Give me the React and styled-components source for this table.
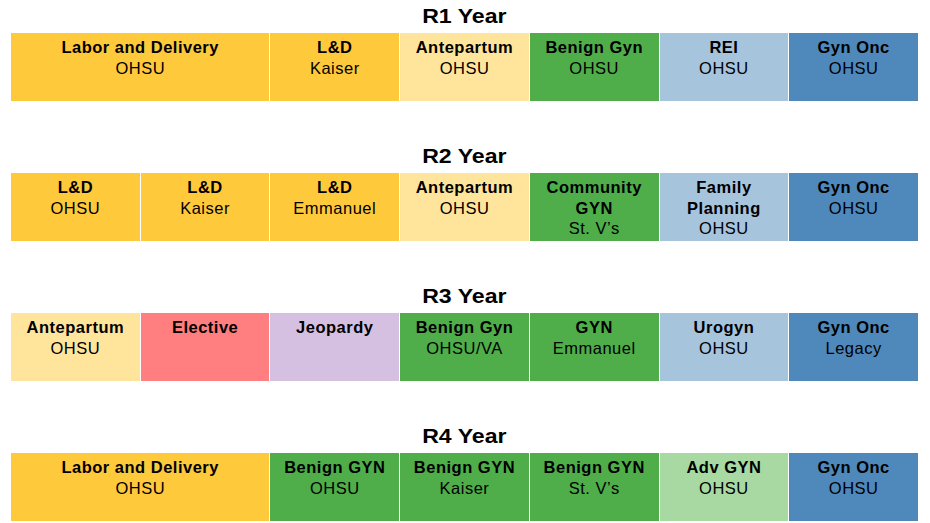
import React from "react";
import styled, { createGlobalStyle } from "styled-components";

const Global = createGlobalStyle`
  html, body { margin: 0; padding: 0; background: #fff; }
  body { font-family: "Liberation Sans", Arial, sans-serif; color: #000; }
`;

const COLORS = {
  yellow: "#FFC93C",
  paleYellow: "#FFE49C",
  green: "#4FAE4A",
  paleGreen: "#A8D9A2",
  paleBlue: "#A7C4DD",
  blue: "#4F88BA",
  red: "#FF7E7F",
  purple: "#D5C0E2",
};

const Page = styled.div`
  width: 930px;
  padding: 0 0 0 11px;
  box-sizing: border-box;
`;

const Section = styled.section`
  width: 907px;
  margin-bottom: 39px;
  &:last-child { margin-bottom: 0; }
`;

const Title = styled.h2`
  margin: 0;
  height: 33px;
  line-height: 32px;
  font-size: 21px;
  font-weight: 700;
  text-align: center;
`;

const TitleText = styled.span`
  display: inline-block;
  transform: scaleX(1.1);
`;

const Bar = styled.div`
  display: grid;
  grid-template-columns: repeat(7, 1fr);
  gap: 1px;
  height: 68px;
  background: #fff;
`;

const Cell = styled.div`
  grid-column: span ${(p) => p.$span || 1};
  background: ${(p) => p.$bg};
  padding-top: 4px;
  text-align: center;
  font-size: 16.5px;
  letter-spacing: 0.5px;
  line-height: 20.5px;
  box-sizing: border-box;
`;

const Bold = styled.div`
  font-weight: 700;
`;

const Sub = styled.div`
  font-weight: 400;
`;

const rows = [
  {
    title: "R1 Year",
    cells: [
      { t: ["Labor and Delivery"], s: "OHSU", c: "yellow", span: 2 },
      { t: ["L&D"], s: "Kaiser", c: "yellow" },
      { t: ["Antepartum"], s: "OHSU", c: "paleYellow" },
      { t: ["Benign Gyn"], s: "OHSU", c: "green" },
      { t: ["REI"], s: "OHSU", c: "paleBlue" },
      { t: ["Gyn Onc"], s: "OHSU", c: "blue" },
    ],
  },
  {
    title: "R2 Year",
    cells: [
      { t: ["L&D"], s: "OHSU", c: "yellow" },
      { t: ["L&D"], s: "Kaiser", c: "yellow" },
      { t: ["L&D"], s: "Emmanuel", c: "yellow" },
      { t: ["Antepartum"], s: "OHSU", c: "paleYellow" },
      { t: ["Community", "GYN"], s: "St. V’s", c: "green" },
      { t: ["Family", "Planning"], s: "OHSU", c: "paleBlue" },
      { t: ["Gyn Onc"], s: "OHSU", c: "blue" },
    ],
  },
  {
    title: "R3 Year",
    cells: [
      { t: ["Antepartum"], s: "OHSU", c: "paleYellow" },
      { t: ["Elective"], s: "", c: "red" },
      { t: ["Jeopardy"], s: "", c: "purple" },
      { t: ["Benign Gyn"], s: "OHSU/VA", c: "green" },
      { t: ["GYN"], s: "Emmanuel", c: "green" },
      { t: ["Urogyn"], s: "OHSU", c: "paleBlue" },
      { t: ["Gyn Onc"], s: "Legacy", c: "blue" },
    ],
  },
  {
    title: "R4 Year",
    cells: [
      { t: ["Labor and Delivery"], s: "OHSU", c: "yellow", span: 2 },
      { t: ["Benign GYN"], s: "OHSU", c: "green" },
      { t: ["Benign GYN"], s: "Kaiser", c: "green" },
      { t: ["Benign GYN"], s: "St. V’s", c: "green" },
      { t: ["Adv GYN"], s: "OHSU", c: "paleGreen" },
      { t: ["Gyn Onc"], s: "OHSU", c: "blue" },
    ],
  },
];

export default function App() {
  return (
    <>
      <Global />
      <Page>
        {rows.map((r) => (
          <Section key={r.title}>
            <Title>
              <TitleText>{r.title}</TitleText>
            </Title>
            <Bar>
              {r.cells.map((c, i) => (
                <Cell key={i} $bg={COLORS[c.c]} $span={c.span}>
                  {c.t.map((line, j) => (
                    <Bold key={j}>{line}</Bold>
                  ))}
                  {c.s && <Sub>{c.s}</Sub>}
                </Cell>
              ))}
            </Bar>
          </Section>
        ))}
      </Page>
    </>
  );
}
